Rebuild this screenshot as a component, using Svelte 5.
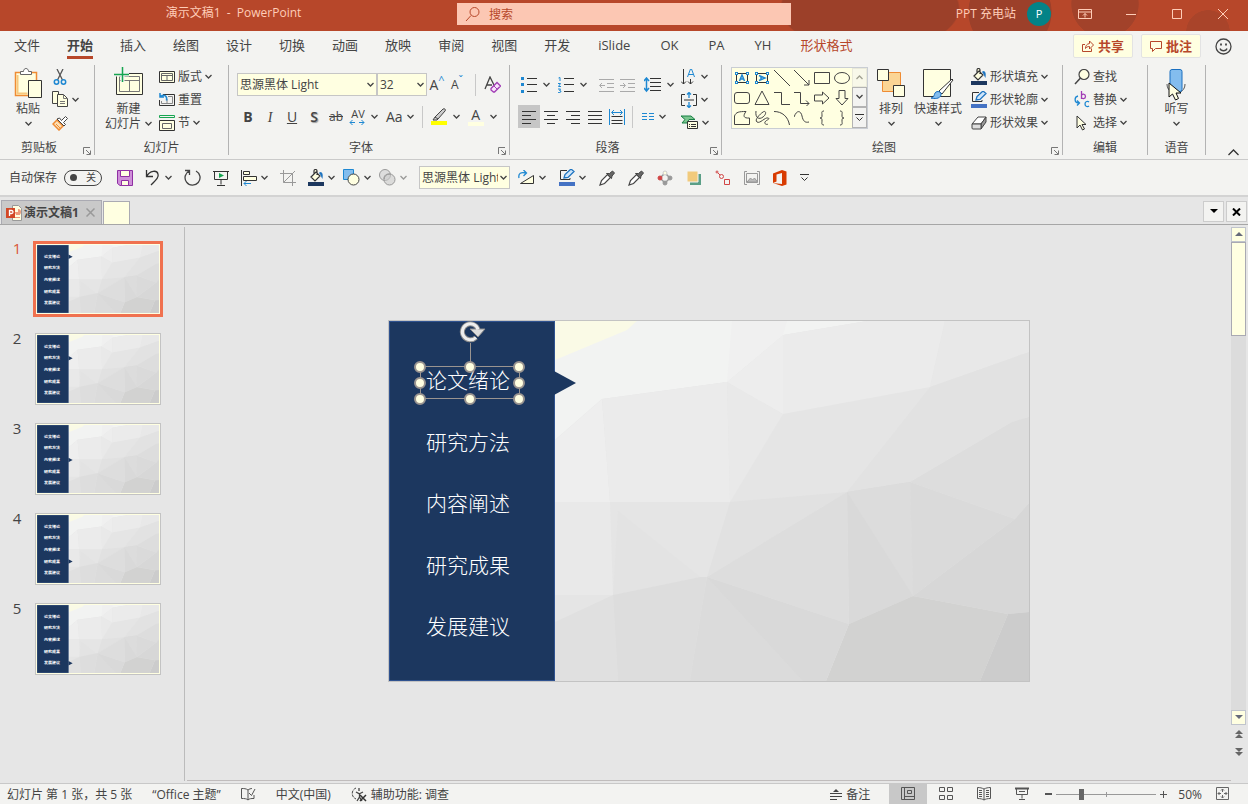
<script lang="ts">
    type Tool = { icon: string; label: string; split?: boolean; near?: boolean; off?: boolean };

    let activeTab = $state('开始');
    let activeSlide = $state(0);
    let autosave = $state(false);
    let zoom = $state(50);

    const tabs = ['文件', '开始', '插入', '绘图', '设计', '切换', '动画', '放映', '审阅', '视图', '开发', 'iSlide', 'OK', 'PA', 'YH', '形状格式'];
    const sections = ['论文绪论', '研究方法', '内容阐述', '研究成果', '发展建议'];

    const quickLeft: Tool[] = [
        { icon: 'save', label: '保存' },
        { icon: 'undo', label: '撤消', split: true },
        { icon: 'redo', label: '重复' },
        { icon: 'present', label: '从头开始' },
        { icon: 'alignObj', label: '对齐', split: true },
        { icon: 'crop', label: '裁剪', off: true },
        { icon: 'fill', label: '形状填充', split: true },
        { icon: 'shapes', label: '形状', split: true, near: true },
        { icon: 'merge', label: '合并形状', split: true, near: true, off: true },
    ];
    const quickRight: Tool[] = [
        { icon: 'rotate', label: '旋转', split: true, near: true },
        { icon: 'outline', label: '形状轮廓', split: true },
        { icon: 'dropper', label: '取色器' },
        { icon: 'dropper', label: '填充取色器' },
        { icon: 'points', label: '编辑顶点' },
        { icon: 'layer', label: '置于顶层' },
        { icon: 'path', label: '动作路径' },
        { icon: 'picture', label: '更改图片' },
        { icon: 'office', label: 'Office' },
    ];

    const gallery = ['textH', 'textV', 'line', 'arrow', 'rect', 'oval', 'round', 'tri', 'elbow', 'elbowArrow', 'arrowR', 'arrowD', 'freeform', 'scribble', 'arc', 'curve', 'braceL', 'braceR'];

    const facets: [string, string][] = [
        ['166,0 478,0 394,14 338,61 213,78 166,119', '#f2f3f2'],
        ['166,0 248,0 238,9 166,39', '#fafae6'],
        ['343,0 398,0 394,14 338,61', '#f0f0f0'],
        ['166,119 213,78 221,181 166,181', '#eeeeee'],
        ['213,78 338,61 341,181 221,181', '#ebebeb'],
        ['338,61 394,93 341,181', '#e9e9e9'],
        ['338,61 394,14 394,93', '#ededed'],
        ['394,14 478,0 556,0 541,66 394,93', '#ebebeb'],
        ['556,0 640,0 640,31 541,66', '#e8e8e8'],
        ['541,66 640,31 640,96 623,101 521,161 458,171', '#e2e2e2'],
        ['521,161 623,101 640,96 640,182 626,198', '#dddddd'],
        ['166,181 221,181 224,274 166,274', '#e9e9e9'],
        ['229,190 311,256 224,274', '#e3e3e3'],
        ['341,181 458,171 318,256', '#e1e1e1'],
        ['318,256 458,171 460,303', '#dddddd'],
        ['458,171 521,161 524,275 460,303', '#d9d9d9'],
        ['458,171 521,161 524,275', '#dcdcdc'],
        ['521,161 626,198 524,275', '#dadada'],
        ['626,198 640,182 640,291 619,293 524,275', '#d7d7d7'],
        ['524,275 619,293 591,360 437,360 460,303', '#d2d2d1'],
        ['619,293 640,291 640,360 591,360', '#cccccc'],
        ['318,256 460,303 437,360 301,360', '#d9d9d9'],
        ['318,256 414,360 301,360', '#dbdbdb'],
        ['166,301 224,274 229,360 166,360', '#e0e0e0'],
        ['224,274 311,256 318,256 301,360 229,360', '#dddddd'],
    ];

    const handles = [[31, 46], [81, 46], [130, 46], [31, 62], [130, 62], [31, 78], [81, 78], [130, 78]];

    const blue = '#1e88d2';
    const pale = '#ffffe1';
    const corners = [[1, 2], [12, 2], [1, 11], [12, 11]].map(([x, y]) => `<rect x="${x + 0.5}" y="${y + 0.5}" width="2" height="2" fill="${pale}" stroke="${blue}"/>`).join('');

    // name: [width, height, markup]
    const icons: Record<string, [number, number, string]> = {
        search: [16, 16, '<circle cx="9.5" cy="6" r="4.5"/><path d="M6 9.5 1 15"/>'],
        ribbonOpts: [14, 12, '<path d="M.5 1.5h13v9H.5zM.5 4h13M7 9.500V5.500M5 7.500l2-2 2 2"/>'],
        minimize: [10, 10, '<path d="M0 5.500h10"/>'],
        maximize: [10, 10, '<path d="M.5.5h9v9h-9z"/>'],
        close: [10, 10, '<path d="m0 0 10 10M10 0 0 10"/>'],
        share: [12, 12, '<path d="M3 4.500H.5v7h9V8.500"/><path d="M7.500 1v2.500C4.500 4 3.500 6 3.500 8.500 4.500 7 5.500 6.500 7.500 6.500V9l4-4z"/>'],
        comment: [12, 12, '<path d="M.5 1.500h11v7H5.500l-3 3v-3h-2z"/>'],
        smile: [17, 17, '<circle cx="8.500" cy="8.500" r="7.500" stroke-width="1.300"/><path d="M5 10.500c1 3 6 3 7 0" stroke-width="1.300"/><path d="M6 5.500v2M11 5.500v2" stroke-width="1.800"/>'],
        paste: [28, 34, `<path d="M1.500 5.500h21v23h-21z" fill="${pale}" stroke="#ef8b33" stroke-width="1.500"/><path d="M3.500 8v18.500h10" stroke="#f7c77c" stroke-width="2"/><path d="M6.500 7.500v-3h3c0-4 5-4 5 0h3v3z" fill="#fff" stroke="#666"/><path d="M14.500 13.500h13v17h-13z" fill="${pale}" stroke="#333"/>`],
        cut: [16, 16, `<path d="M5 0l5.500 11M11 0 5.500 11" stroke="#555" stroke-width="1.300"/><circle cx="4.500" cy="13" r="2.200" stroke="${blue}" stroke-width="1.500"/><circle cx="11.500" cy="13" r="2.200" stroke="${blue}" stroke-width="1.500"/>`],
        copy: [16, 17, `<path d="M.5.5h6v12h-6z" fill="${pale}"/><path d="M5.500 3.500h6l4 4v8h-10z" fill="${pale}"/><path d="M11.500 3.500v4h4M8 10.500h5M8 12.500h5" stroke="#777"/>`],
        painter: [16, 16, '<path d="M5 5 1 9l6 6 4-4z" fill="#fde0b5" stroke="#ef8b33" stroke-width="1.500"/><path d="m4 9 5 5" stroke="#ef8b33"/><path d="m5 4 7 7 1.500-1.500-2-2 4-4-2-2-4 4L7.500 3z" fill="#fff" stroke="#444"/>'],
        newSlide: [30, 34, `<path d="M2.500 6.500h26v21h-26z" fill="${pale}" stroke="#333"/><path d="M5.500 9.500h20v15h-20zM5.500 13.500h20M15.500 13.500v11" fill="none" stroke="#777"/><path d="M8.500 0v15M0 7.500h15" stroke="#f3f3f1" stroke-width="4"/><path d="M8.500 0v15M0 7.500h15" stroke="#16a550" stroke-width="1.500"/>`],
        layout: [16, 14, `<path d="M.5 1.500h15v11H.5z" fill="${pale}" stroke="#333"/><path d="M2.500 3.500h11v7h-11zM2.500 5.500h11M8 5.500v5" stroke="#666"/>`],
        reset: [16, 15, `<path d="M4 2.500h11.500v11H.5V8" stroke="#333"/><path d="M9 4.500h4.500v7h-11V9M8 7v4" stroke="#888"/><path d="M1 1v4h4M1.500 4.500c4-3 7 0 6 4" stroke="${blue}" stroke-width="1.500"/>`],
        section: [16, 16, `<path d="M.5.500h15v2H.5z" stroke="#16a550"/><path d="M.5 5.500h15v10H.5z" fill="${pale}" stroke="#333"/><path d="M3.500 8.500h9v5h-9z" stroke="#666"/>`],
        clear: [17, 17, '<path d="M1 13 6 1l4.500 9M3 9h5" stroke="#444" stroke-width="1.300"/><path d="m7 12.500 6-6 3.500 3.500-6 6H9.500L7 14z" fill="#f7e3fa" stroke="#a13cb5" stroke-width="1.300"/><path d="m10 10 3.500 3.500" stroke="#a13cb5"/>'],
        highlight: [16, 18, '<path d="M4 9 12 1c2-1 3 1 2 2l-7 8zM4 9l-2 3h4l1-1" fill="#ccc" stroke="#444"/><path d="M0 13h16v4H0z" fill="#ff0" stroke="none"/>'],
        bullets: [16, 16, `<path d="M0 0h3v3H0zM0 6h3v3H0zM0 13h3v3H0z" fill="${blue}" stroke="none"/><path d="M6 1.500h10M6 7.500h10M6 14.500h10" stroke="#333"/>`],
        numbers: [16, 16, `<path d="M6 1.500h10M6 7.500h10M6 14.500h10" stroke="#333"/><path d="M.5 1 2 .5V4M0 6.500h2.500L.5 9.500H3M0 12h2.500l-1 1.500L3 14c0 2-2 1.500-3 1.500" stroke="${blue}"/>`],
        dedent: [16, 14, '<path d="M0 1.500h15M8 5.500h7M8 9.500h7M0 13.500h15M6 7.500H1M3 5 .5 7.500 3 10" stroke="#aaa"/>'],
        indent: [16, 14, '<path d="M0 1.500h15M8 5.500h7M8 9.500h7M0 13.500h15M0 7.500h5M3 5l2.500 2.500L3 10" stroke="#aaa"/>'],
        spacing: [17, 16, `<path d="M6 1.500h11M6 5.500h11M6 9.500h11M6 13.500h11" stroke="#333"/><path d="M2.500 1v13M0 4l2.500-3L5 4M0 11l2.500 3L5 11" stroke="${blue}" stroke-width="1.500"/>`],
        left: [16, 16, '<path d="M1 2.500h14M1 6.500h9M1 10.500h14M1 14.500h9" stroke="#333"/>'],
        center: [16, 16, '<path d="M1 2.500h14M4 6.500h8M1 10.500h14M4 14.500h8" stroke="#333"/>'],
        right: [16, 16, '<path d="M1 2.500h14M6 6.500h9M1 10.500h14M6 14.500h9" stroke="#333"/>'],
        justify: [16, 16, '<path d="M1 2.500h14M1 6.500h14M1 10.500h14M1 14.500h14" stroke="#333"/>'],
        distribute: [16, 16, `<path d="M2.500 7.500h11M2.500 11.500h11M2.500 14.500h11" stroke="#333"/><path d="M.5 0v16M15.500 0v16M3 3.500h10M5 1 2.500 3.500 5 6M11 1l2.500 2.500L11 6" stroke="${blue}"/>`],
        columns: [14, 10, `<path d="M1 1.500h5M1 4.500h5M1 7.500h5M8 1.500h5M8 4.500h5M8 7.500h5" stroke="${blue}"/>`],
        direction: [16, 16, `<path d="M2.500 0v15M0 12.500 2.500 15 5 12.500M9.500 10v5M7 12.500 9.500 15l2.500-2.500" stroke="#333"/><path d="m6.500 8 3-8h1l3 8M7.500 5.500h5" stroke="${blue}"/>`],
        valign: [16, 16, `<path d="M4 2.500H.5v11H4M12 2.500h3.500v11H12M3 8h10" stroke="#333"/><path d="M8 0v6M8 10v6M6 2.500 8 .500l2 2M6 13.500l2 2 2-2" stroke="${blue}" stroke-width="1.300"/>`],
        smartart: [17, 15, `<path d="M0 1h10l4 3.500H8L6 8H1l3-3.500z" fill="#7cc58f" stroke="#178045"/><path d="M6.500 6.500h10v7h-10z" fill="${pale}" stroke="#333"/><path d="M8 9.500h1M10 9.500h5M8 11.500h1M10 11.500h5" stroke="#333"/>`],
        arrange: [28, 34, `<path d="M5.500 5.500h18v19h-18z" fill="#fbd595" stroke="#ef8b33"/><path d="M.5 2.500h11v11H.5zM16.500 18.500h11v11h-11z" fill="${pale}" stroke="#333"/>`],
        styles: [32, 34, `<path d="M1.500 2.500h27v27h-27z" fill="${pale}" stroke="#333"/><path d="M30 12 17 24l3 3 11-14z" fill="#fff" stroke="#333"/><path d="M9 31c3 0 3-3 4-5 2-3 7-1 6 2-1 4-7 4-10 3z" fill="#83bdee" stroke="#1a6fc0"/>`],
        fill: [16, 17, `<path d="m3 8 5-5 4 4-5 5zM6 5V2c0-2 3-2 3 0v4" fill="${pale}" stroke="#333" stroke-width="1.200"/><path d="M12 3c3 0 3 3 2.500 7C13 8 13 6 11 4z" fill="#1e74c0" stroke="none"/><path d="M0 13h16v4H0z" fill="#1c375f" stroke="none"/>`],
        outline: [16, 17, `<path d="M8 1.500H1.500v9H11V9" stroke="#333"/><path d="m5 9 1-3.500L12 0l3 2.500L9 8.500z" fill="#cfe6fa" stroke="#1e74c0" stroke-width="1.300"/><path d="M0 13h16v4H0z" fill="#4472c4" stroke="none"/>`],
        effects: [16, 14, '<path d="M1 8 7 1h8l-5 7z" fill="#fff" stroke="#444"/><path d="m10 8 5-7v5l-5 7z" fill="#999" stroke="#444"/><path d="M1 8h9v5H2q-1 0-1-1z" fill="#ddd" stroke="#444"/>'],
        find: [16, 16, '<circle cx="10" cy="5.500" r="5" fill="#ffffe1" stroke="#444" stroke-width="1.200"/><path d="M6.500 9 1 15" stroke="#444" stroke-width="1.500"/>'],
        replace: [16, 17, `<path d="M7.500 0v8M7.500 5c0-3 4-2 4 .500s-4 3-4 .500" stroke="#a13cb5" stroke-width="1.300"/><path d="M15 11c-1-1-4-1-4 2s3 3 4 2M4 5C0 6 0 12 5 12M3 9.500 5.500 12 3 14.500" stroke="${blue}" stroke-width="1.300"/>`],
        select: [16, 16, '<path d="M3 1v12l3-3 2.500 5 2-1L8 9.500h4z" fill="#ffffe1" stroke="#333"/>'],
        mic: [20, 34, `<path d="M1 17c0 12 18 12 18 0" stroke="#555"/><rect x="4" y="2.500" width="12" height="22" rx="2" fill="#83bdee" stroke="#1a6fc0"/>`],
        pointer: [14, 19, '<path d="M1 1v14l3.500-3 3 6 3-1.500L8 11h5z" fill="#ffffe1" stroke="#111"/>'],
        launcher: [8, 8, '<path d="M.5 7V.5H7M3 3l4 4M7.500 3.500v4h-4" stroke="#777"/>'],
        collapse: [11, 7, '<path d="m.5 6 5-5 5 5" stroke="#333" stroke-width="1.300"/>'],
        save: [16, 16, '<path d="M.500.500h15v15H3l-2.500-2z" fill="#cf8fd9" stroke="#8f2fa3"/><path d="M3.500.5h9v6h-9zM4.500 10.500h7v5h-7z" fill="#ffffe1" stroke="#8f2fa3"/>'],
        undo: [16, 16, '<path d="M1.500 0v6.500H8M1.500 6.500C5 0 12 0 13 4c1 3-1 5-7 11" stroke="#333" stroke-width="1.300"/>'],
        redo: [17, 17, '<path d="M1 1.500h4.500V6M5.500 1.800A7.500 7.500 0 1 0 12 2" stroke="#444" stroke-width="1.300"/>'],
        present: [16, 16, '<path d="M0 1.500h16M1.500 1.500v8h13v-8M8 9.500v5M4 15.500h8" stroke="#333"/><path d="m6 3 5 2.500L6 8z" fill="#16a550" stroke="none"/>'],
        alignObj: [16, 16, `<path d="M.5 0v16M2.500 1.500h6v3h-6zM2.500 6.500h13v4h-13z" fill="${pale}" stroke="#333"/><path d="M10 13.500H3M5.500 11 3 13.500 5.500 16" stroke="${blue}"/>`],
        crop: [16, 16, '<path d="M3.500 0v12.500H16M0 3.500h12.500V16M3.500 12.500 15 1" stroke="#999"/>'],
        shapes: [17, 17, `<path d="M.5.500h10v10H.5z" fill="#83bdee" stroke="${blue}"/><circle cx="10.500" cy="10.500" r="5.500" fill="${pale}" stroke="#444"/>`],
        merge: [17, 17, '<circle cx="6" cy="6" r="5.500" fill="#ddd" stroke="#999"/><circle cx="10.500" cy="10.500" r="5.500" fill="#ccc" fill-opacity=".6" stroke="#999"/><path d="M5 10c0-4 2-5 6-5" stroke="#999"/>'],
        rotate: [17, 15, `<path d="M15.500 5.500v8h-13z" fill="${pale}" stroke="#333"/><path d="M1 8C0 3 3 2 8 3M5.500 0l3 3-3 3" stroke="${blue}" stroke-width="1.300"/>`],
        dropper: [16, 16, '<path d="m1 15 1.500-4.500 6-6 3 3-6 6z" fill="#fff" stroke="#444" stroke-width="1.200"/><path d="m7.500 3.500 5 5 .500-2.500 2.500-3-2-2-3 2.500z" fill="#666" stroke="#444"/>'],
        points: [16, 16, '<path d="M8 3 3 8l5 5 5-5z" stroke="#999" stroke-width="1.500"/><circle cx="8" cy="3" r="2" fill="#ffffe1" stroke="#ccc"/><circle cx="3" cy="8" r="2" fill="#d14545" stroke="#d14545"/><circle cx="13" cy="8" r="2" fill="#999" stroke="#999"/><circle cx="8" cy="13" r="2" fill="#999" stroke="#999"/>'],
        layer: [16, 16, '<path d="M4 4h11v11H4z" fill="#5b9f87" stroke="none"/><path d="M1 1h11v11H1z" fill="#f1ca7c" stroke="#f3f3f1"/>'],
        path: [16, 16, '<circle cx="2" cy="2" r="1" stroke="#d14545"/><circle cx="6.500" cy="6.500" r="2" stroke="#d14545"/><path d="M9.500 9.500h5v5h-5zM3 3l2 2" stroke="#d14545"/>'],
        picture: [16, 14, '<path d="M3 .500H.5v13H3M13 .500h2.500v13H13M2.500 2.500h11v9h-11z" stroke="#999"/><path d="m3 11 3.500-4 2 2 2-2 3 4z" fill="#bbb" stroke="#999"/>'],
        office: [14, 16, '<path d="M0 3.500 9 0l4.500 1.500v13L9 16 0 13l9 1V3L3.500 4.500v7L0 13z" fill="#d83b01" stroke="none"/>'],
        more: [9, 7, '<path d="M0 .500h9M1.500 3.500l3 3 3-3" stroke="#333"/>'],
        doc: [16, 16, '<path d="M6.500.500h6l3 3v12h-9z" fill="#ffffe1" stroke="#999"/><path d="M9 12.500h5M10 9.500h4" stroke="#ef9a7a"/><path d="M12 4a3 3 0 1 1-3 3h3z" fill="#ef9a7a" stroke="none"/><path d="M0 3h9v10H0z" fill="#d24726" stroke="none"/><path d="M3.500 11V5.500h2c2 0 2 3 0 3h-2" stroke="#fff" stroke-width="1.300"/>'],
        tabClose: [9, 9, '<path d="m.5.500 8 8M8.500.500l-8 8" stroke="#999" stroke-width="1.500"/>'],
        panelMenu: [8, 5, '<path d="M0 0h8L4 4z" fill="#000" stroke="none"/>'],
        panelClose: [9, 8, '<path d="m1 .500 7 7M8 .500l-7 7" stroke="#000" stroke-width="2"/>'],
        up: [8, 5, '<path d="M0 4h8L4 0z" fill="#666a7a" stroke="none"/>'],
        down: [8, 5, '<path d="M0 0h8L4 4z" fill="#666a7a" stroke="none"/>'],
        prev: [8, 9, '<path d="M0 4h8L4 0zM0 8h8L4 4z" fill="#666" stroke="none"/>'],
        next: [8, 9, '<path d="M0 0h8L4 4zM0 4h8L4 8z" fill="#666" stroke="none"/>'],
        spell: [15, 14, '<path d="M7 3C5 1.500 3 1.500.5 1.500v10c3 0 5 0 6.500 1.500M7 3v10M7 3c1-1 3-1.500 4-1.500M7 13c1.500-1.500 3-1.500 6-1.500V8M8 6l2.500 2.500L14 2" stroke="#555"/>'],
        access: [16, 15, '<path d="M5 1C0 3 0 10 5 12" stroke="#444" stroke-dasharray="3 1"/><path d="M8 1v3M5 5l3.500 2v3L6 14M8.500 10 11 14M8 7l4-2" stroke="#444" stroke-width="1.300"/><path d="m9 8 6 6M15 8l-6 6" stroke="#333" stroke-width="1.500"/>'],
        notes: [12, 12, '<path d="M3 4h6L6 1z" fill="#444" stroke="none"/><path d="M0 5.500h12M0 8.500h12M0 11.500h7" stroke="#444"/>'],
        normal: [14, 14, '<path d="M.5.500h13v12H.5zM3.500.500v12M3.500 9.500h10M6.500 3.500h4v3h-4z" stroke="#555"/>'],
        sorter: [14, 14, '<path d="M.5.500h5v4h-5zM8.500.500h5v4h-5zM.5 8.500h5v4h-5zM8.500 8.500h5v4h-5z" stroke="#555"/>'],
        reading: [14, 14, '<path d="M7 2C5 1 3 .500.500.500v11c3 0 5 .500 6.500 1.500C8.500 12 10.500 11.500 13.500 11.500V.500C11 .500 9 1 7 2zv11M2 3.500h3M2 5.500h3M2 7.500h3M2 9.500h3M9 3.500h3M9 5.500h3M9 7.500h3M9 9.500h3" stroke="#555"/>'],
        show: [14, 14, '<path d="M0 1.500h14" stroke="#555" stroke-width="2"/><path d="M1.500 2v5.500h11V2M7 7.500v4M4 12.500h6M4 4.500h6" stroke="#555"/>'],
        fit: [14, 14, '<path d="M.5.500h12v12H.5zM6.500 2v3M6.500 8v3M2 6.500h3M8 6.500h3M5 3.500 6.500 2 8 3.500M5 9.500 6.500 11 8 9.500M3.500 5 2 6.500 3.500 8M9.500 5 11 6.500 9.500 8" stroke="#666"/>'],
        textH: [16, 16, `<path d="M2.500 3.500h11v9h-11z" stroke="#333"/><path d="m5.500 11 2.500-6 2.500 6M6 9h4" stroke="${blue}" stroke-width="1.500"/>${corners}`],
        textV: [16, 16, `<path d="M2.500 3.500h11v9h-11z" stroke="#333"/><path d="m5 5.500 6 2.500-6 2.500M7 6v4" stroke="${blue}" stroke-width="1.500"/>${corners}`],
        line: [16, 16, '<path d="m0 0 16 16"/>'],
        arrow: [16, 16, '<path d="m0 0 15 15M15 10v5h-5"/>'],
        rect: [16, 16, '<path d="M.5 2.500h15v11H.5z"/>'],
        oval: [16, 16, '<ellipse cx="8" cy="8" rx="7.500" ry="5.500"/>'],
        round: [16, 16, '<rect x=".5" y="2.500" width="15" height="11" rx="2.500"/>'],
        tri: [16, 16, '<path d="M8 1 15 14.500H1z"/>'],
        elbow: [16, 16, '<path d="M0 2.500h7.500v12H16"/>'],
        elbowArrow: [16, 16, '<path d="M0 2.500h6.500v11H15M12 10.500l3 3-3 3"/>'],
        arrowR: [16, 16, '<path d="M.5 5h8V2l6.500 6-6.500 6v-3h-8z"/>'],
        arrowD: [16, 16, '<path d="M5 .5v8H2l6 6.500 6-6.500h-3v-8z"/>'],
        freeform: [16, 16, '<path d="M.5 6C2 2 5 1.500 12 1.500c-3 4-3 7 3.500 6.500v6.500H.5z"/>'],
        scribble: [16, 16, '<path d="M2 1c-1 7 3 9 7 6s3-7 0-5-9 8-6 10 8-5 11-4-2 2-3 4 2 3 3 2"/>'],
        arc: [16, 16, '<path d="M0 1.500c8 0 14 5 15.500 13.500"/>'],
        curve: [16, 16, '<path d="M0 7C3-1 7 1 8 6s3 7 7 6"/>'],
        braceL: [16, 16, '<path d="M10 1C7 1 8 3 8 5s0 3-2 3c2 0 2 1 2 3s-1 4 2 4"/>'],
        braceR: [16, 16, '<path d="M6 1c3 0 2 2 2 4s0 3 2 3c-2 0-2 1-2 3s1 4-2 4"/>'],
    };
</script>

{#snippet icon(name: string)}
    <svg class="icon" width={icons[name][0]} height={icons[name][1]} viewBox="0 0 {icons[name][0]} {icons[name][1]}" aria-hidden="true">
        {@html icons[name][2]}
    </svg>
{/snippet}

{#snippet chev()}
    <svg class="chev" width="7" height="5" viewBox="0 0 7 5" aria-hidden="true"><path d="m.5 1 3 3 3-3" /></svg>
{/snippet}

{#snippet tool(name: string, label: string, split: boolean)}
    <button class="tool" class:split aria-label={label}>
        {@render icon(name)}
        {#if split}{@render chev()}{/if}
    </button>
{/snippet}

{#snippet command(name: string, label: string, split: boolean)}
    <button class="command">
        {@render icon(name)}
        <span>{label}</span>
        {#if split}{@render chev()}{/if}
    </button>
{/snippet}

{#snippet big(name: string, label: string)}
    <button class="big">
        {@render icon(name)}
        <span>{label}</span>
        <span>{@render chev()}</span>
    </button>
{/snippet}

{#snippet groupName(label: string, launcher: boolean)}
    <div class="group-name">
        <span>{label}</span>
        {#if launcher}
            <button class="launcher" aria-label="{label}设置">{@render icon('launcher')}</button>
        {/if}
    </div>
{/snippet}

{#snippet slide(active: number, selected: boolean)}
    <svg class="slide" viewBox="0 0 640 360" preserveAspectRatio="none">
        <rect width="640" height="360" fill="#e5e5e5" />
        {#each facets as [points, color]}
            <polygon {points} fill={color} />
        {/each}
        <rect x="0.5" y="0.5" width="165" height="359" fill="#1c375f" stroke="#2f528f" />
        <path d="M165 {50 + active * 61.5}l22 12-22 12z" fill="#1c375f" />
        {#each sections as section, i}
            <text x="37" y={67 + Math.round(i * 61.5)}>{section}</text>
        {/each}
        {#if selected}
            <g fill="#ffffe1" stroke="#9a9490">
                <path d="M31.500 45.500h99v32h-99zM81.500 22v24" fill="none" />
                {#each handles as [cx, cy]}
                    <circle {cx} {cy} r="5" stroke-width="2" />
                {/each}
            </g>
            <path d="M87 16.500a8 8 0 1 1 2-8" fill="none" stroke="#8c8c8c" stroke-width="5" />
            <path d="M81 8h15l-7 8z" fill="#ddd" stroke="#8c8c8c" />
            <path d="M87 16.500a8 8 0 1 1 2-8" fill="none" stroke="#eee" stroke-width="3" />
        {/if}
    </svg>
{/snippet}

<div class="app">
    <header class="titlebar">
        <div class="title">演示文稿1 &nbsp;-&nbsp; PowerPoint</div>
        <label class="search">
            {@render icon('search')}
            <input type="text" placeholder="搜索" aria-label="搜索" />
        </label>
        <div class="window">
            <span>PPT 充电站</span>
            <span class="avatar">P</span>
            <button aria-label="功能区显示选项">{@render icon('ribbonOpts')}</button>
            <button aria-label="最小化">{@render icon('minimize')}</button>
            <button aria-label="最大化">{@render icon('maximize')}</button>
            <button aria-label="关闭">{@render icon('close')}</button>
        </div>
    </header>

    <nav class="tabs">
        {#each tabs as tab}
            <button
                class="tab"
                class:active={tab === activeTab}
                class:latin={/^[a-z]/i.test(tab)}
                class:context={tab === '形状格式'}
                onclick={() => (activeTab = tab)}>{tab}</button>
        {/each}
        <div class="tab-actions">
            <button class="pill">{@render icon('share')}共享</button>
            <button class="pill">{@render icon('comment')}批注</button>
            <button class="smile" aria-label="反馈">{@render icon('smile')}</button>
        </div>
    </nav>

    <section class="ribbon">
        <div class="group clipboard">
            <div class="group-body">
                {@render big('paste', '粘贴')}
                <div class="stack">
                    {@render tool('cut', '剪切', false)}
                    {@render tool('copy', '复制', true)}
                    {@render tool('painter', '格式刷', false)}
                </div>
            </div>
            {@render groupName('剪贴板', true)}
        </div>

        <div class="group slides">
            <div class="group-body">
                <button class="big">
                    {@render icon('newSlide')}
                    <span>新建</span>
                    <span>幻灯片 {@render chev()}</span>
                </button>
                <div class="stack">
                    {@render command('layout', '版式', true)}
                    {@render command('reset', '重置', false)}
                    {@render command('section', '节', true)}
                </div>
            </div>
            {@render groupName('幻灯片', false)}
        </div>

        <div class="group font">
            <div class="group-body rows">
                <div class="row">
                    <div class="combo family">
                        <select aria-label="字体"><option>思源黑体 Light</option></select>
                        {@render chev()}
                    </div>
                    <div class="combo size">
                        <select aria-label="字号"><option>32</option></select>
                        {@render chev()}
                    </div>
                    <button class="letter grow" aria-label="增大字号">A<sup>^</sup></button>
                    <button class="letter grow shrink" aria-label="减小字号">A<sup>ˇ</sup></button>
                    <span class="sep"></span>
                    {@render tool('clear', '清除格式', false)}
                </div>
                <div class="row">
                    <button class="letter"><b>B</b></button>
                    <button class="letter"><i>I</i></button>
                    <button class="letter"><u>U</u></button>
                    <button class="letter shadow">S</button>
                    <button class="letter small"><s>ab</s></button>
                    <button class="tool split kern" aria-label="字符间距">
                        <span>AV<svg width="16" height="7" viewBox="0 0 16 7"><path d="M1 3.500h5M10 3.500h5M3.500 1 1 3.500 3.500 6M12.500 1 15 3.500 12.500 6" /></svg></span>
                        {@render chev()}
                    </button>
                    <button class="tool split after case">Aa{@render chev()}</button>
                    <span class="sep"></span>
                    {@render tool('highlight', '突出显示', true)}
                    <button class="tool split after color" aria-label="字体颜色"><span>A</span>{@render chev()}</button>
                </div>
            </div>
            {@render groupName('字体', true)}
        </div>

        <div class="group paragraph">
            <div class="group-body">
                <div class="rows">
                    <div class="row lists">
                        {@render tool('bullets', '项目符号', true)}
                        {@render tool('numbers', '编号', true)}
                        <div class="pair">
                            {@render tool('dedent', '减少缩进', false)}
                            {@render tool('indent', '增加缩进', false)}
                        </div>
                        {@render tool('spacing', '行距', true)}
                    </div>
                    <div class="row">
                        {#each ['left', 'center', 'right', 'justify', 'distribute'] as align}
                            <button class="align" class:on={align === 'left'} aria-label={align}>{@render icon(align)}</button>
                        {/each}
                        <span class="sep near"></span>
                        {@render tool('columns', '分栏', true)}
                    </div>
                </div>
                <div class="stack">
                    {@render tool('direction', '文字方向', true)}
                    {@render tool('valign', '对齐文本', true)}
                    {@render tool('smartart', '转换为 SmartArt', true)}
                </div>
            </div>
            {@render groupName('段落', true)}
        </div>

        <div class="group drawing">
            <div class="group-body">
                <div class="gallery">
                    <div class="shapes">
                        {#each gallery as shape}
                            <button aria-label={shape}>{@render icon(shape)}</button>
                        {/each}
                    </div>
                    <div class="gallery-scroll">
                        <button class="off" aria-label="上一行"><svg class="chev" width="7" height="5" viewBox="0 0 7 5"><path d="m.5 4 3-3 3 3" /></svg></button>
                        <button aria-label="下一行">{@render chev()}</button>
                        <button aria-label="其他">{@render icon('more')}</button>
                    </div>
                </div>
                {@render big('arrange', '排列')}
                {@render big('styles', '快速样式')}
                <div class="stack">
                    {@render command('fill', '形状填充', true)}
                    {@render command('outline', '形状轮廓', true)}
                    {@render command('effects', '形状效果', true)}
                </div>
            </div>
            {@render groupName('绘图', true)}
        </div>

        <div class="group editing">
            <div class="group-body">
                <div class="stack">
                    {@render command('find', '查找', false)}
                    {@render command('replace', '替换', true)}
                    {@render command('select', '选择', true)}
                </div>
            </div>
            {@render groupName('编辑', false)}
        </div>

        <div class="group voice">
            <div class="group-body">
                {@render big('mic', '听写')}
                <span class="pointer">{@render icon('pointer')}</span>
            </div>
            {@render groupName('语音', false)}
        </div>

        <button class="collapse" aria-label="折叠功能区">{@render icon('collapse')}</button>
    </section>

    <section class="quick">
        <label class="autosave">
            自动保存
            <input type="checkbox" bind:checked={autosave} />
            <span class="switch">{autosave ? '开' : '关'}</span>
        </label>
        {#each quickLeft as item}
            <span class="quick-item" class:near={item.near} class:off={item.off}>{@render tool(item.icon, item.label, !!item.split)}</span>
        {/each}
        <div class="combo quick-font">
            <select aria-label="主题字体"><option>思源黑体 Light</option></select>
            {@render chev()}
        </div>
        {#each quickRight as item}
            <span class="quick-item wide" class:near={item.near}>{@render tool(item.icon, item.label, !!item.split)}</span>
        {/each}
        <span class="quick-more">{@render tool('more', '自定义快速访问工具栏', false)}</span>
    </section>

    <section class="documents">
        <div class="document">
            {@render icon('doc')}
            <strong>演示文稿1</strong>
            <button aria-label="关闭文稿">{@render icon('tabClose')}</button>
        </div>
        <button class="new-document" aria-label="新建文稿"></button>
        <div class="document-actions">
            <button aria-label="文稿列表">{@render icon('panelMenu')}</button>
            <button aria-label="关闭">{@render icon('panelClose')}</button>
        </div>
    </section>

    <main>
        <aside>
            {#each sections as section, i}
                <button class="thumb" class:current={i === activeSlide} aria-label={section} onclick={() => (activeSlide = i)}>
                    <span class="number">{i + 1}</span>
                    <span class="frame">{@render slide(i, false)}</span>
                </button>
            {/each}
        </aside>
        <div class="stage">
            <div class="canvas">{@render slide(activeSlide, true)}</div>
        </div>
        <div class="scroll">
            <button aria-label="向上滚动">{@render icon('up')}</button>
            <div class="track"><div class="handle"></div></div>
            <button aria-label="向下滚动">{@render icon('down')}</button>
            <button class="jump" aria-label="上一张幻灯片">{@render icon('prev')}</button>
            <button class="jump" aria-label="下一张幻灯片">{@render icon('next')}</button>
        </div>
    </main>

    <footer>
        <span>幻灯片 第 {activeSlide + 1} 张，共 {sections.length} 张</span>
        <span>“Office 主题”</span>
        {@render icon('spell')}
        <span>中文(中国)</span>
        <button class="access">{@render icon('access')}辅助功能: 调查</button>
        <div class="views">
            <button class="notes">{@render icon('notes')}备注</button>
            <button class="view on" aria-label="普通">{@render icon('normal')}</button>
            <button class="view" aria-label="幻灯片浏览">{@render icon('sorter')}</button>
            <button class="view" aria-label="阅读视图">{@render icon('reading')}</button>
            <button class="view" aria-label="幻灯片放映">{@render icon('show')}</button>
            <button class="step" aria-label="缩小" onclick={() => (zoom -= 10)}></button>
            <input type="range" min="10" max="180" bind:value={zoom} aria-label="缩放" />
            <button class="step plus" aria-label="放大" onclick={() => (zoom += 10)}></button>
            <span class="percent">{zoom}%</span>
            <button class="fit" aria-label="适应窗口">{@render icon('fit')}</button>
        </div>
    </footer>
</div>

<style>
    :global(body) {
        margin: 0;
    }

    .app {
        display: flex;
        flex-direction: column;
        height: 100vh;
        overflow: hidden;
        background: #e6e6e6;
        color: #444;
        font-family: "Open Sans", "Noto Sans CJK SC", sans-serif;
        font-size: 12px;
        line-height: 15px;
        white-space: nowrap;
    }

    .app * {
        box-sizing: border-box;
    }

    button,
    select,
    input {
        margin: 0;
        padding: 0;
        border: 0;
        background: none;
        color: inherit;
        font: inherit;
    }

    svg {
        display: block;
        flex: none;
    }

    .icon {
        fill: none;
        stroke: currentColor;
    }

    .chev {
        fill: none;
        stroke: #444;
        stroke-width: 1.3;
    }

    /* title bar */

    .titlebar {
        display: grid;
        grid-template-columns: 1fr 334px 1fr;
        flex: none;
        height: 31px;
        background:
            radial-gradient(ellipse 90px 44px at 870px 8px, #9c4029 98%, transparent),
            radial-gradient(circle 42px at 1010px 12px, #9c402a 98%, transparent),
            radial-gradient(circle 34px at 1105px 4px, #a2422a 98%, transparent),
            radial-gradient(circle 22px at 1208px 32px, #a9442a 98%, transparent),
            #b7472a;
        color: #ffcdb8;
    }

    .title {
        padding: 5px 0 0 10px;
        text-align: center;
    }

    .search {
        display: flex;
        align-items: center;
        gap: 8px;
        height: 22px;
        margin-top: 3px;
        padding-left: 8px;
        background: #fcc7b3;
        color: #b7472a;
    }

    .search input {
        flex: 1;
        outline: 0;
    }

    .search input::placeholder {
        color: #b7472a;
        opacity: 1;
    }

    .window {
        display: flex;
        align-items: center;
        justify-content: flex-end;
        height: 27px;
        padding-right: 2px;
    }

    .window button {
        display: grid;
        place-items: center;
        width: 46px;
        height: 27px;
    }

    .avatar {
        width: 24px;
        height: 24px;
        margin: 0 11px;
        border-radius: 50%;
        background: #038387;
        color: #fff;
        font-size: 11px;
        line-height: 24px;
        text-align: center;
    }

    /* ribbon tabs */

    .tabs {
        display: flex;
        gap: 27px;
        flex: none;
        height: 34px;
        padding-left: 14px;
        background: #f3f3f1;
    }

    .tab {
        position: relative;
        height: 28px;
        font-size: 13px;
        line-height: 28px;
    }

    .tab.latin {
        padding: 0 2px 0 1px;
    }

    .tab.active {
        font-weight: 700;
    }

    .tab.active::after {
        position: absolute;
        right: 0;
        bottom: 0;
        left: 0;
        height: 3px;
        background: #b7472a;
        content: "";
    }

    .tab.context {
        color: #b7472a;
    }

    .tab-actions {
        display: flex;
        gap: 8px;
        height: 24px;
        margin: 3px 16px 0 auto;
    }

    .pill {
        display: flex;
        align-items: center;
        gap: 4px;
        padding: 0 8px;
        border: 1px solid #e3e3e3;
        border-radius: 2px;
        background: #ffffe1;
        color: #b7472a;
        font-size: 13px;
        font-weight: 700;
    }

    .smile {
        margin-left: 6px;
    }

    /* ribbon */

    .ribbon {
        display: flex;
        flex: none;
        height: 95px;
        border-bottom: 1px solid #cacaca;
        background: #f3f3f1;
    }

    .group {
        display: flex;
        flex-direction: column;
        height: 90px;
        border-right: 1px solid #b3b3b3;
    }

    .group-body {
        display: flex;
        height: 76px;
    }

    .group-name {
        display: flex;
        line-height: 15px;
    }

    .group-name span {
        flex: 1;
        text-align: center;
    }

    .launcher {
        width: 16px;
        padding: 6px 0 0 5px;
    }

    .clipboard {
        width: 95px;
    }

    .clipboard .group-body {
        gap: 10px;
        padding-left: 14px;
    }

    .slides {
        width: 134px;
    }

    .slides .group-body {
        gap: 7px;
        padding-left: 10px;
    }

    .font {
        width: 281px;
    }

    .font .group-body,
    .paragraph .group-body {
        padding-left: 8px;
    }

    .paragraph {
        width: 212px;
    }

    .drawing {
        width: 341px;
    }

    .drawing .group-body {
        gap: 9px;
        padding-left: 9px;
    }

    .editing {
        width: 85px;
    }

    .editing .group-body {
        padding-left: 11px;
    }

    .voice {
        width: 58px;
    }

    .voice .group-body {
        position: relative;
        justify-content: center;
    }

    .pointer {
        position: absolute;
        top: 17px;
        left: 20px;
    }

    .big {
        display: flex;
        flex-direction: column;
        align-items: center;
        height: 66px;
        padding-top: 2px;
    }

    .big span {
        display: flex;
        align-items: center;
        gap: 4px;
        height: 15px;
    }

    .stack {
        display: flex;
        flex-direction: column;
        align-items: flex-start;
    }

    .stack .tool,
    .command {
        height: 23px;
    }

    .command {
        display: flex;
        align-items: center;
        gap: 3px;
    }

    .tool {
        display: flex;
        align-items: center;
        gap: 4px;
        height: 24px;
    }

    .rows {
        display: flex;
        flex-direction: column;
        gap: 9px;
        padding-top: 8px;
    }

    .paragraph .rows {
        width: 163px;
    }

    .row {
        display: flex;
        align-items: center;
        height: 23px;
    }

    .lists {
        gap: 8px;
        padding-left: 3px;
    }

    .lists > .tool,
    .font .sep ~ .tool {
        gap: 6px;
    }

    .pair {
        display: flex;
        gap: 5px;
        margin-left: 4px;
    }

    .sep {
        width: 1px;
        height: 22px;
        margin: 0 8px;
        background: #c8c8c8;
    }

    .sep.near {
        margin-left: 4px;
    }

    .after {
        margin-left: 8px;
    }

    .combo {
        display: flex;
        align-items: center;
        height: 23px;
        border: 1px solid #c6c6c6;
        background: #ffffe1;
    }

    .combo select {
        flex: 1;
        min-width: 0;
        height: 21px;
        padding-left: 2px;
        appearance: none;
        outline: 0;
    }

    .combo .chev {
        margin: 0 2px;
    }

    .family {
        width: 140px;
    }

    .size {
        width: 50px;
    }

    .letter {
        width: 22px;
        height: 24px;
        font-size: 14px;
        line-height: 24px;
    }

    .letter i {
        font-family: "Liberation Serif", serif;
    }

    .letter sup {
        color: #1e88d2;
        font-size: 11px;
        line-height: 8px;
    }

    .letter.grow {
        width: 20px;
    }

    .letter.shrink,
    .letter.small {
        font-size: 12px;
    }

    .letter.shadow {
        font-weight: 600;
        text-shadow: 1px 1px 1px #999;
    }

    .kern {
        margin-left: 2px;
    }

    .kern span {
        width: 18px;
        font-size: 11px;
        line-height: 11px;
    }

    .kern span svg {
        fill: none;
        stroke: #1e88d2;
    }

    .case {
        font-size: 14px;
    }

    .color span {
        width: 16px;
        border-bottom: 4px solid #ffffe1;
        font-size: 14px;
        line-height: 15px;
    }

    .align {
        display: grid;
        place-items: center;
        width: 22px;
        height: 23px;
    }

    .align.on {
        background: #c6c6c6;
    }

    .gallery {
        display: flex;
        height: 62px;
        margin-top: 2px;
        border: 1px solid #c9cdd3;
        background: #ffffe1;
    }

    .shapes {
        display: grid;
        grid-template-columns: repeat(6, 20px);
        grid-auto-rows: 20px;
    }

    .shapes button {
        display: grid;
        place-items: center;
    }

    .gallery-scroll {
        display: grid;
        width: 15px;
    }

    .gallery-scroll button {
        display: grid;
        place-items: center;
        border: 1px solid #b3b3b3;
        background: #f3f3f1;
    }

    .gallery-scroll .off {
        border-color: #d5d5d5;
        opacity: 0.5;
    }

    .collapse {
        align-self: flex-end;
        margin: 0 9px 3px auto;
    }

    /* quick access toolbar */

    .quick {
        display: flex;
        align-items: center;
        flex: none;
        height: 37px;
        padding-left: 9px;
        border-bottom: 2px solid #d3d3d3;
        background: #f3f3f1;
    }

    .autosave {
        display: flex;
        align-items: center;
        gap: 7px;
        margin-right: 3px;
    }

    .autosave input {
        position: absolute;
        opacity: 0;
    }

    .switch {
        display: flex;
        align-items: center;
        justify-content: space-between;
        width: 38px;
        height: 16px;
        padding: 0 5px;
        border: 1px solid #444;
        border-radius: 8px;
        font-size: 10px;
    }

    .switch::before {
        width: 7px;
        height: 7px;
        border-radius: 50%;
        background: #444;
        content: "";
    }

    .quick-item {
        margin-left: 12px;
    }

    .quick-item.wide {
        margin-left: 13px;
    }

    .quick-item.near {
        margin-left: 8px;
    }

    .quick-item.off .chev {
        opacity: 0.5;
    }

    .quick-font {
        width: 91px;
        margin-left: 12px;
    }

    .quick-more {
        margin-left: 13px;
    }

    /* document tabs */

    .documents {
        display: flex;
        align-items: flex-end;
        gap: 1px;
        flex: none;
        height: 28px;
        padding-left: 1px;
        border-bottom: 1px solid #a6a6a6;
    }

    .document {
        display: flex;
        align-items: center;
        gap: 2px;
        height: 24px;
        padding: 0 6px 0 4px;
        border: 1px solid #aaaab2;
        border-bottom: 0;
        background: #c9c9c9;
    }

    .document button {
        margin-left: 5px;
    }

    .new-document {
        width: 27px;
        height: 23px;
        border: 1px solid #aaaab2;
        border-bottom: 0;
        background: #ffffe1;
    }

    .document-actions {
        display: flex;
        gap: 2px;
        margin: 0 1px 2px auto;
    }

    .document-actions button {
        display: grid;
        place-items: center;
        width: 21px;
        height: 21px;
        border: 1px solid #ccc;
        background: #f3f3f1;
    }

    /* workspace */

    main {
        display: flex;
        flex: 1;
        min-height: 0;
    }

    aside {
        width: 185px;
        margin: 2px 0;
        padding: 15px 0 0 12px;
        border-right: 1px solid #bbb;
    }

    .thumb {
        display: flex;
        gap: 12px;
        height: 90px;
        align-items: flex-start;
    }

    .number {
        width: 10px;
        font-size: 15px;
        line-height: 12px;
    }

    .frame {
        width: 126px;
        height: 72px;
        margin: 1px;
        padding: 1px;
        border: 1px solid #c3c3c3;
        background: #ffffe1;
    }

    .current .number {
        color: #d9573a;
    }

    .current .frame {
        width: 130px;
        height: 76px;
        margin: -1px;
        border: 3px solid #f0714f;
    }

    .slide {
        width: 100%;
        height: 100%;
    }

    .slide text {
        fill: #fff;
        font-family: "Noto Sans CJK SC", sans-serif;
        font-size: 21px;
        font-weight: 300;
    }

    .frame .slide text {
        font-weight: 700;
    }

    .stage {
        display: grid;
        place-items: center;
        flex: 1;
        margin: 0 0 2px 2px;
        padding-bottom: 4px;
        border-bottom: 1px solid #c0bcbc;
    }

    .canvas {
        width: 642px;
        height: 362px;
        border: 1px solid #c3c3c3;
    }

    .scroll {
        display: flex;
        flex-direction: column;
        width: 15px;
        margin: 2px 2px 22px 0;
    }

    .scroll button {
        display: grid;
        place-items: center;
        height: 15px;
        border: 1px solid #c0c4cc;
        background: #ffffe1;
    }

    .scroll .jump {
        height: 18px;
        border: 0;
        background: none;
    }

    .track {
        flex: 1;
        background: #dcdcdc;
    }

    .handle {
        height: 20%;
        border: 1px solid #a9a9b2;
        background: #ffffe1;
    }

    /* status bar */

    footer {
        display: flex;
        align-items: center;
        gap: 20px;
        flex: none;
        height: 21px;
        padding-left: 7px;
        border-top: 1px solid #c8c8c8;
        background: #f3f3f1;
    }

    .access,
    .notes {
        display: flex;
        align-items: center;
        gap: 4px;
    }

    .notes {
        margin-right: 19px;
    }

    .views {
        display: flex;
        align-items: center;
        margin: 0 18px 0 auto;
    }

    .view {
        display: grid;
        place-items: center;
        width: 38px;
        height: 20px;
    }

    .view.on {
        background: #c8c8c8;
    }

    .step {
        width: 7px;
        height: 7px;
        margin: 0 4px;
        background: linear-gradient(#555, #555) center / 7px 2px no-repeat;
    }

    .step.plus {
        background:
            linear-gradient(#555, #555) center / 7px 1px no-repeat,
            linear-gradient(#555, #555) center / 1px 7px no-repeat;
    }

    input[type="range"] {
        width: 100px;
        height: 12px;
        appearance: none;
        background:
            linear-gradient(#999, #999) center / 100% 1px no-repeat,
            linear-gradient(#999, #999) center / 1px 5px no-repeat;
    }

    input[type="range"]::-webkit-slider-thumb {
        width: 5px;
        height: 11px;
        appearance: none;
        background: #666;
    }

    .percent {
        margin: 0 14px 0 7px;
    }
</style>
